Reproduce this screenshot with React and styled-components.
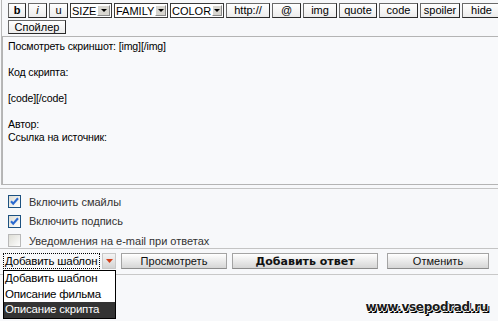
import React from 'react'
import styled, { createGlobalStyle } from 'styled-components'

const Global = createGlobalStyle`
  html, body {
    margin: 0;
    padding: 0;
    background: #f7f8fa;
  }
  body {
    font-family: "Liberation Sans", Arial, sans-serif;
    font-size: 11px;
    color: #000;
    width: 498px;
    height: 321px;
    overflow: hidden;
  }
`

const Page = styled.div`
  position: relative;
  width: 498px;
  height: 321px;
`

const Editor = styled.div`
  border-left: 1px solid #b8b8b8;
  margin-left: 1px;
`

const Toolbar = styled.div`
  display: flex;
  gap: 2px;
  padding: 3px 0 0 6px;
  height: 15px;
`

const ToolButton = styled.div`
  box-sizing: border-box;
  width: ${p => p.$w}px;
  height: 15px;
  flex: none;
  border: 1px solid #2a2a2a;
  border-top-color: #6a6a6a;
  border-left-color: #6a6a6a;
  background: linear-gradient(#ffffff, #ececec);
  display: flex;
  align-items: center;
  justify-content: center;
  font-family: "Liberation Sans", Arial, sans-serif;
  font-size: 11px;
  font-weight: ${p => (p.$bold ? 'bold' : 'normal')};
  font-style: ${p => (p.$italic ? 'italic' : 'normal')};
  color: #000;
  line-height: 1;
`

const ToolSelect = styled.div`
  box-sizing: border-box;
  width: ${p => p.$w}px;
  height: 15px;
  flex: none;
  border: 1px solid #3a3a3a;
  background: #fff;
  display: flex;
  align-items: stretch;
  font-family: "Liberation Sans", Arial, sans-serif;
  font-size: 11px;
`

const ToolSelectLabel = styled.span`
  flex: 1;
  padding-left: 1px;
  display: flex;
  align-items: center;
`

const ToolArrow = styled.span`
  width: 13px;
  margin: 1px;
  border: 1px solid #ffffff;
  border-right-color: #8a8a8a;
  border-bottom-color: #8a8a8a;
  background: #d8d6d0;
  display: flex;
  align-items: center;
  justify-content: center;
`

const Toolbar2 = styled.div`
  padding: 2px 0 0 6px;
  height: 14px;
`

const SpoilerButton = styled(ToolButton)`
  width: 58px;
  height: 14px;
`

const Area = styled.textarea`
  display: block;
  box-sizing: border-box;
  width: 497px;
  height: 149px;
  margin: 2px 0 0 0;
  padding: 3px 5px;
  border: 1px solid #b4b4b4;
  background: #f8f9fb;
  font-family: "Liberation Sans", Arial, sans-serif;
  font-size: 10.6px;
  letter-spacing: -0.15px;
  line-height: 13px;
  color: #000;
  resize: none;
  outline: none;
  overflow: hidden;
`

const Options = styled.div`
  border-top: 1px solid #c4c4c4;
  border-bottom: 1px solid #c4c4c4;
  margin-top: 3px;
  padding: 3px 0 0 8px;
  height: 56px;
`

const OptionRow = styled.label`
  display: flex;
  align-items: center;
  gap: 8px;
  height: 19.5px;
  font-family: "Liberation Sans", Arial, sans-serif;
  font-size: 11px;
  color: #333;
`

const Footer = styled.div`
  display: flex;
  align-items: center;
  padding: 3px 0 0 3px;
  height: 18px;
  border-bottom: 1px solid #c8c8c8;
  padding-bottom: 4px;
`

const TemplateSelect = styled.div`
  box-sizing: border-box;
  width: 97px;
  height: 16px;
  border: 1px dotted #000;
  display: flex;
  align-items: center;
  padding-left: 1px;
  font-family: "Liberation Sans", Arial, sans-serif;
  font-size: 11.5px;
  letter-spacing: -0.2px;
  white-space: nowrap;
  overflow: hidden;
`

const TemplateArrow = styled.div`
  box-sizing: border-box;
  width: 14px;
  height: 16px;
  margin-left: 2px;
  border: 1px solid #c8c8c8;
  background: linear-gradient(#f4f4f4, #d4d4d4);
  display: flex;
  align-items: center;
  justify-content: center;
`

const ActionButton = styled.div`
  box-sizing: border-box;
  width: ${p => p.$w}px;
  margin-left: ${p => p.$ml}px;
  height: 16px;
  border: 1px solid #a4a4a4;
  border-bottom-color: #8c8c8c;
  background: linear-gradient(#ffffff, #e6e6e6 60%, #d6d6d6);
  display: flex;
  align-items: center;
  justify-content: center;
  font-family: ${p => (p.$bold ? 'Verdana, "DejaVu Sans"' : '"Liberation Sans", Arial')}, sans-serif;
  font-size: 11px;
  font-weight: ${p => (p.$bold ? 'bold' : 'normal')};
  color: #111;
`

const DropList = styled.ul`
  position: absolute;
  left: 3px;
  top: 270px;
  width: 113px;
  box-sizing: border-box;
  margin: 0;
  padding: 0;
  list-style: none;
  border: 1px solid #000;
  background: #fff;
  font-family: "Liberation Sans", Arial, sans-serif;
  font-size: 11.5px;
  letter-spacing: -0.2px;
`

const DropItem = styled.li`
  height: 15.5px;
  line-height: 15.5px;
  padding-left: 1px;
  white-space: nowrap;
  background: ${p => (p.$active ? '#333333' : 'transparent')};
  color: ${p => (p.$active ? '#fff' : '#000')};
`

const Watermark = styled.div`
  position: absolute;
  right: 10px;
  top: 300px;
  font-family: Verdana, "DejaVu Sans", sans-serif;
  font-weight: bold;
  font-size: 12px;
  letter-spacing: -0.3px;
  color: #1a1a1a;
  text-shadow:
    1px 0 0 #fff, -1px 0 0 #fff, 0 1px 0 #fff, 0 -1px 0 #fff,
    2px 2px 0 #000, 1px 2px 0 #000;
`

const TriangleDown = ({ color = '#000', w = 7, h = 4 }) => (
  <svg width={w} height={h} viewBox={`0 0 ${w} ${h}`}>
    <polygon points={`0,0 ${w},0 ${w / 2},${h}`} fill={color} />
  </svg>
)

const CheckBox = ({ checked }) => (
  <svg width="13" height="13" viewBox="0 0 13 13">
    <defs>
      <linearGradient id="cbg" x1="0" y1="0" x2="1" y2="1">
        <stop offset="0" stopColor="#dcdcd4" />
        <stop offset="1" stopColor="#ffffff" />
      </linearGradient>
    </defs>
    <rect x="0.5" y="0.5" width="12" height="12" fill="url(#cbg)" stroke={checked ? '#1c5180' : '#b8b8b8'} />
    {checked && (
      <path d="M3 6.2 L5.2 8.6 L10 3.2" fill="none" stroke="#2a6ad0" strokeWidth="2.1" />
    )}
  </svg>
)

const text = `Посмотреть скриншот: [img][/img]

Код скрипта:

[code][/code]

Автор:
Ссылка на источник:`

const tools = [
  { label: 'http://', w: 44 },
  { label: '@', w: 29 },
  { label: 'img', w: 34 },
  { label: 'quote', w: 38 },
  { label: 'code', w: 39 },
  { label: 'spoiler', w: 40 },
  { label: 'hide', w: 39 },
]

const selects = [
  { label: 'SIZE', w: 42 },
  { label: 'FAMILY', w: 54 },
  { label: 'COLOR', w: 54 },
]

const options = [
  { label: 'Включить смайлы', checked: true },
  { label: 'Включить подпись', checked: true },
  { label: 'Уведомления на e-mail при ответах', checked: false },
]

const App = () => {
  return (
    <Page>
      <Global />
      <Editor>
        <Toolbar>
          <ToolButton $w={18} $bold>b</ToolButton>
          <ToolButton $w={19} $italic>i</ToolButton>
          <ToolButton $w={19}>u</ToolButton>
          {selects.map(s => (
            <ToolSelect key={s.label} $w={s.w}>
              <ToolSelectLabel>{s.label}</ToolSelectLabel>
              <ToolArrow><TriangleDown w={6} h={3} /></ToolArrow>
            </ToolSelect>
          ))}
          {tools.map(t => (
            <ToolButton key={t.label} $w={t.w}>{t.label}</ToolButton>
          ))}
        </Toolbar>
        <Toolbar2>
          <SpoilerButton $w={58}>Спойлер</SpoilerButton>
        </Toolbar2>
        <Area readOnly value={text} />
      </Editor>
      <Options>
        {options.map(o => (
          <OptionRow key={o.label}>
            <CheckBox checked={o.checked} />
            {o.label}
          </OptionRow>
        ))}
      </Options>
      <Footer>
        <TemplateSelect>Добавить шаблон</TemplateSelect>
        <TemplateArrow><TriangleDown color="#d2401c" w={7} h={4} /></TemplateArrow>
        <ActionButton $w={106} $ml={5}>Просмотреть</ActionButton>
        <ActionButton $w={146} $ml={5} $bold>Добавить ответ</ActionButton>
        <ActionButton $w={102} $ml={9}>Отменить</ActionButton>
      </Footer>
      <DropList>
        <DropItem>Добавить шаблон</DropItem>
        <DropItem>Описание фильма</DropItem>
        <DropItem $active>Описание скрипта</DropItem>
      </DropList>
      <Watermark>www.vsepodrad.ru</Watermark>
    </Page>
  )
}

export default App
